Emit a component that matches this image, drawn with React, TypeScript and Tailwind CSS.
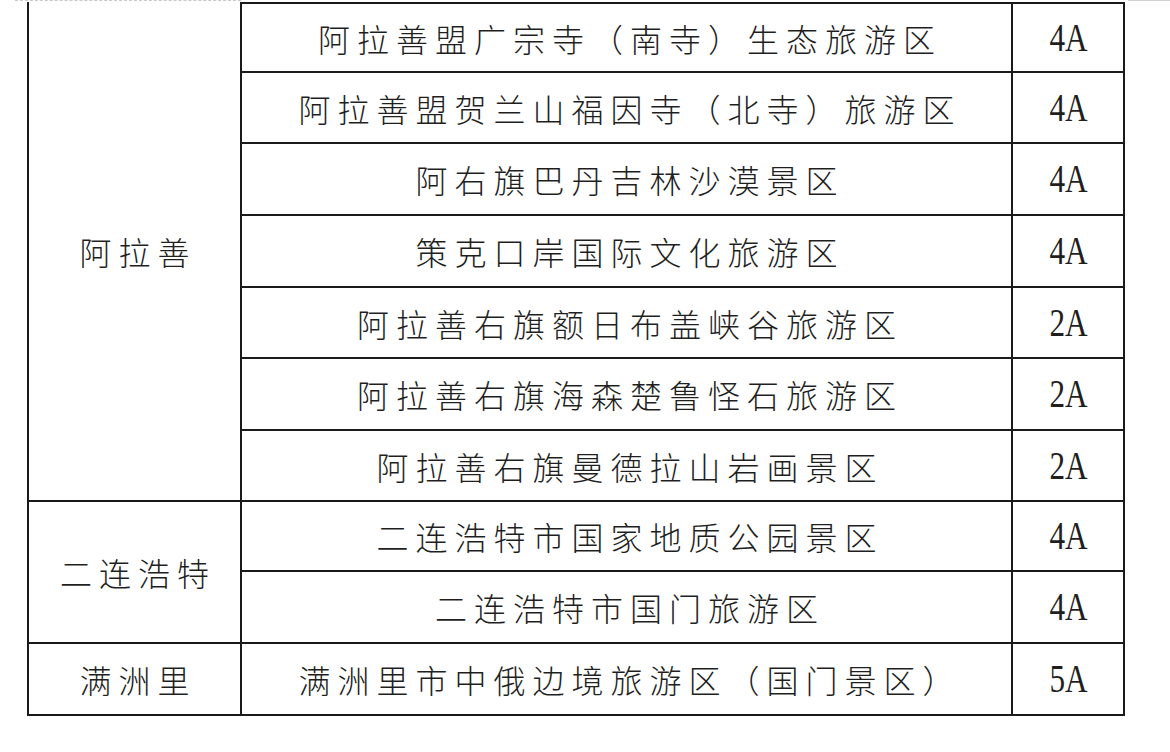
import React from 'react';

// 景区名录表（阿拉善 / 二连浩特 / 满洲里）
type Row = { name: string; level: string };

const GROUPS: { region: string; rows: Row[] }[] = [
  {
    region: '阿拉善',
    rows: [
      { name: '阿拉善盟广宗寺（南寺）生态旅游区', level: '4A' },
      { name: '阿拉善盟贺兰山福因寺（北寺）旅游区', level: '4A' },
      { name: '阿右旗巴丹吉林沙漠景区', level: '4A' },
      { name: '策克口岸国际文化旅游区', level: '4A' },
      { name: '阿拉善右旗额日布盖峡谷旅游区', level: '2A' },
      { name: '阿拉善右旗海森楚鲁怪石旅游区', level: '2A' },
      { name: '阿拉善右旗曼德拉山岩画景区', level: '2A' },
    ],
  },
  {
    region: '二连浩特',
    rows: [
      { name: '二连浩特市国家地质公园景区', level: '4A' },
      { name: '二连浩特市国门旅游区', level: '4A' },
    ],
  },
  {
    region: '满洲里',
    rows: [{ name: '满洲里市中俄边境旅游区（国门景区）', level: '5A' }],
  },
];

const SPANS = ['row-span-7', 'row-span-2', 'row-span-1'];

const cjk = "font-['Noto_Sans_CJK_SC',sans-serif] font-light text-[32px] tracking-[7px] text-[#1f1f1f] leading-none";

export default function App() {
  let rowIndex = 0;

  return (
    <div className="w-[1170px] h-[752px] bg-white overflow-hidden">
      {/* 上方页面残留的分隔线 */}
      <div className="flex h-[2px]">
        <div className="w-[15px]" />
        <div className="w-[226px] border-t border-dashed border-[#c8c8c8]" />
        <div className="flex-1" />
        <div className="w-[42px] border-t border-[#d0d0d0]" />
      </div>

      <div className="ml-[27px] w-[1098px] grid grid-cols-[213px_771px_112px] grid-rows-[71px_71px_72px_72px_71px_72px_71px_70px_72px_72px] border-l-2 border-[#1a1a1a]">
        {GROUPS.map((group, gi) => (
          <React.Fragment key={group.region}>
            <div
              className={`${SPANS[gi]} col-start-1 flex items-center justify-center border-r-2 border-b-2 border-[#1a1a1a] pl-[7px] ${cjk}`}
              style={{ gridRowStart: rowIndex + 1 }}
            >
              {group.region}
            </div>
            {group.rows.map((row) => {
              const first = rowIndex === 0;
              const r = ++rowIndex;
              return (
                <React.Fragment key={row.name}>
                  <div
                    className={`col-start-2 flex items-center justify-center border-r-2 border-b-2 border-[#1a1a1a] pl-[7px] ${
                      first ? 'border-t-2' : ''
                    } ${cjk}`}
                    style={{ gridRowStart: r }}
                  >
                    {row.name}
                  </div>
                  <div
                    className={`col-start-3 flex items-center justify-center border-r-2 border-b-2 border-[#1a1a1a] ${
                      first ? 'border-t-2' : ''
                    }`}
                    style={{ gridRowStart: r }}
                  >
                    <span className="inline-block scale-x-[0.78] font-['Liberation_Serif',serif] text-[40px] leading-none text-[#1f1f1f]">
                      {row.level}
                    </span>
                  </div>
                </React.Fragment>
              );
            })}
          </React.Fragment>
        ))}
      </div>
    </div>
  );
}
